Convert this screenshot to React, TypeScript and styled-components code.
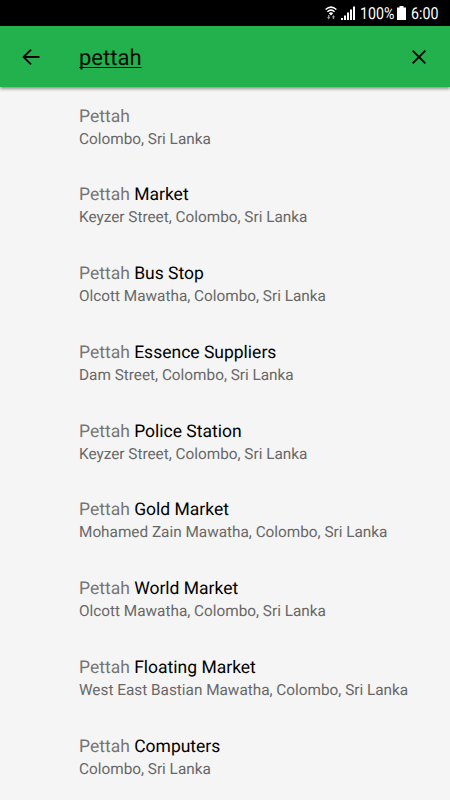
import React from "react";
import styled, { createGlobalStyle } from "styled-components";

const Global = createGlobalStyle`
  * { box-sizing: border-box; }
  body { margin: 0; background: #f5f5f5; font-family: Roboto, sans-serif; text-rendering: geometricPrecision; }
`;
const Screen = styled.div`
  width: 450px; height: 800px; overflow: hidden; background: #f5f5f5;
  display: flex; flex-direction: column;
`;
const StatusBar = styled.div`
  height: 26px; flex: none; background: #000; color: #fff;
  display: flex; align-items: center; justify-content: flex-end;
  padding: 2px 11px 0 0; font-size: 16.5px; line-height: 24px;
`;
const StatusText = styled.span<{ $width: number }>`
  width: ${(p) => p.$width}px; padding-top: 2px; white-space: nowrap; transform: scaleX(0.86); transform-origin: left center;
`;
const Wifi = styled.svg`display: block; flex: none; margin: 0 4px 2px 0;`;
const Signal = styled.svg`display: block; flex: none; margin: 0 5px 2px 0;`;
const Battery = styled.svg`display: block; flex: none; margin: 0 5px 2px 3px;`;
const AppBar = styled.header`
  height: 61px; flex: none; background: #22b14c; display: flex; align-items: center;
  padding: 0 19px 0 19px; box-shadow: 0 2px 3px rgba(0,0,0,.4); z-index: 1;
`;
const Icon = styled.svg`display: block; flex: none;`;
const Query = styled.div`
  flex: 1; margin: 4px 0 0 36px; font-size: 22px; line-height: 28px; color: #020d05;
  text-decoration: underline; text-decoration-thickness: 1px; text-underline-offset: 2px;
  text-decoration-skip-ink: none;
`;
const List = styled.ul`list-style: none; margin: 0; padding: 18.5px 0 0 79px;`;
const Item = styled.li`height: 78.75px;`;
const Title = styled.div`font-size: 17.5px; line-height: 22px; color: #000; white-space: nowrap;`;
const Match = styled.span`color: #757575;`;
const Address = styled.div`font-size: 15.33px; line-height: 22px; color: #686868; white-space: nowrap;`;

const places: [string, string][] = [
  ["", "Colombo, Sri Lanka"],
  ["Market", "Keyzer Street, Colombo, Sri Lanka"],
  ["Bus Stop", "Olcott Mawatha, Colombo, Sri Lanka"],
  ["Essence Suppliers", "Dam Street, Colombo, Sri Lanka"],
  ["Police Station", "Keyzer Street, Colombo, Sri Lanka"],
  ["Gold Market", "Mohamed Zain Mawatha, Colombo, Sri Lanka"],
  ["World Market", "Olcott Mawatha, Colombo, Sri Lanka"],
  ["Floating Market", "West East Bastian Mawatha, Colombo, Sri Lanka"],
  ["Computers", "Colombo, Sri Lanka"],
];

export default function App() {
  return (
    <Screen>
      <Global />
      <StatusBar>
        <Wifi width="12" height="14" viewBox="0 0 12 14" fill="#fff">
          <path d="M.6 3.5Q6-1.2 11.4 3.5M2.4 5.7Q6 2.6 9.6 5.7" stroke="#fff" strokeWidth="1.5" fill="none" />
          <path d="M3.8 7.2Q6 5.4 8.2 7.2L6 9.4z" />
          <path d="M2 11h1V9h1.4v2h1l-1.7 2.4zM6.8 11.2 8.5 9l1.7 2.2h-1V13H7.8v-1.8z" opacity=".6" />
        </Wifi>
        <Signal width="14" height="14" viewBox="0 0 14 14" fill="#fff">
          <path d="M0 12h2v2H0zM3 9.5h2V14H3zM6 6.5h2V14H6zM9 3.5h2V14H9zM12 .5h2V14h-2z" />
        </Signal>
        <StatusText $width={34}>100%</StatusText>
        <Battery width="9" height="14" viewBox="0 0 9 14" fill="#fff"><path d="M2.5 0h4v1.5H9V14H0V1.5h2.5z" /></Battery>
        <StatusText $width={28}>6:00</StatusText>
      </StatusBar>
      <AppBar>
        <Icon width="24" height="24" viewBox="0 0 24 24"><path d="M20.5 11.1H6.9l5.8-5.8-1.3-1.3L3.3 12l8.1 8 1.3-1.3-5.8-5.8h13.6z" /></Icon>
        <Query>pettah</Query>
        <Icon width="24" height="24" viewBox="0 0 24 24"><path d="M19 6.3 17.7 5 12 10.7 6.3 5 5 6.3l5.7 5.7L5 17.7 6.3 19l5.7-5.7 5.7 5.7 1.3-1.3-5.7-5.7z" /></Icon>
      </AppBar>
      <List>
        {places.map(([name, address]) => (
          <Item key={name}>
            <Title><Match>Pettah</Match> {name}</Title>
            <Address>{address}</Address>
          </Item>
        ))}
      </List>
    </Screen>
  );
}
